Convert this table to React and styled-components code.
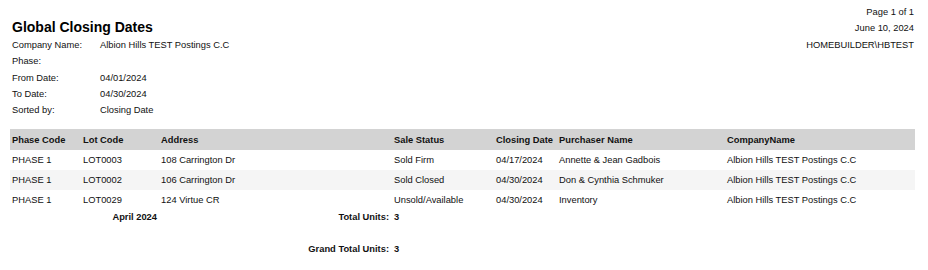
import React from "react";
import styled, { createGlobalStyle } from "styled-components";

const COLUMNS = [
  "Phase Code",
  "Lot Code",
  "Address",
  "Sale Status",
  "Closing Date",
  "Purchaser Name",
  "CompanyName",
];

const ROWS = [
  ["PHASE 1", "LOT0003", "108 Carrington Dr", "Sold Firm", "04/17/2024", "Annette & Jean Gadbois", "Albion Hills TEST Postings C.C"],
  ["PHASE 1", "LOT0002", "106 Carrington Dr", "Sold Closed", "04/30/2024", "Don & Cynthia Schmuker", "Albion Hills TEST Postings C.C"],
  ["PHASE 1", "LOT0029", "124 Virtue CR", "Unsold/Available", "04/30/2024", "Inventory", "Albion Hills TEST Postings C.C"],
];

const META = [
  ["Company Name:", "Albion Hills TEST Postings C.C"],
  ["Phase:", ""],
  ["From Date:", "04/01/2024"],
  ["To Date:", "04/30/2024"],
  ["Sorted by:", "Closing Date"],
];

const GlobalStyle = createGlobalStyle`
  body {
    margin: 0;
    background: #ffffff;
    font-family: "Liberation Sans", Arial, sans-serif;
    color: #111111;
  }
`;

export default function App() {
  return (
    <>
      <GlobalStyle />
      <Page>
        <Header>
          <LeftBlock>
            <Title>Global Closing Dates</Title>
            <Meta>
              {META.map(([label, value]) => (
                <MetaRow key={label}>
                  <MetaLabel>{label}</MetaLabel>
                  <span>{value}</span>
                </MetaRow>
              ))}
            </Meta>
          </LeftBlock>
          <RightBlock>
            <RightLine>Page 1 of 1</RightLine>
            <RightLine>June 10, 2024</RightLine>
            <RightLine $gap>HOMEBUILDER\HBTEST</RightLine>
          </RightBlock>
        </Header>

        <Table>
          <Row $head>
            {COLUMNS.map((c) => (
              <Cell key={c}>{c}</Cell>
            ))}
          </Row>
          {ROWS.map((r, i) => (
            <Row key={r[1]} $striped={i % 2 === 1}>
              {r.map((v, j) => (
                <Cell key={j}>{v}</Cell>
              ))}
            </Row>
          ))}
          <Footer>
            <Cell />
            <Cell $bold $right>April 2024</Cell>
            <Cell $bold $right $pad>Total Units:</Cell>
            <Cell $bold>3</Cell>
          </Footer>
          <Footer $grand>
            <Cell />
            <Cell />
            <Cell $bold $right $pad>Grand Total Units:</Cell>
            <Cell $bold>3</Cell>
          </Footer>
        </Table>
      </Page>
    </>
  );
}

const Page = styled.div`
  width: 928px;
  height: 270px;
  font-size: 9.33px;
`;

const Header = styled.div`
  display: flex;
  justify-content: space-between;
  padding: 3px 14px 0 12px;
`;

const LeftBlock = styled.div`
  display: flex;
  flex-direction: column;
`;

const Title = styled.div`
  margin-top: 16px;
  font-size: 14px;
  font-weight: bold;
  line-height: 16px;
  color: #000;
`;

const Meta = styled.div`
  margin-top: 2px;
  display: flex;
  flex-direction: column;
`;

const MetaRow = styled.div`
  display: grid;
  grid-template-columns: 88px 1fr;
  height: 16.25px;
  line-height: 16.25px;
`;

const MetaLabel = styled.span``;

const RightBlock = styled.div`
  display: flex;
  flex-direction: column;
  align-items: flex-end;
  padding-top: 1px;
`;

const RightLine = styled.div`
  line-height: 16px;
  margin-top: ${(p) => (p.$gap ? "1px" : "0")};
`;

const Table = styled.div`
  margin: 11px 13px 0 10px;
`;

const Row = styled.div`
  display: grid;
  grid-template-columns: 71px 78px 233px 102px 63px 168px 1fr;
  align-items: center;
  height: ${(p) => (p.$head ? "21px" : "20px")};
  background: ${(p) => (p.$head ? "#d3d3d3" : p.$striped ? "#f5f5f5" : "#ffffff")};
  font-weight: ${(p) => (p.$head ? "bold" : "normal")};
`;

const Footer = styled(Row)`
  height: 14px;
  background: transparent;
  margin-top: ${(p) => (p.$grand ? "18px" : "0")};
`;

const Cell = styled.div`
  padding: 0 ${(p) => (p.$pad ? "3px" : "2px")} 0 2px;
  white-space: nowrap;
  font-weight: ${(p) => (p.$bold ? "bold" : "inherit")};
  text-align: ${(p) => (p.$right ? "right" : "left")};
`;
